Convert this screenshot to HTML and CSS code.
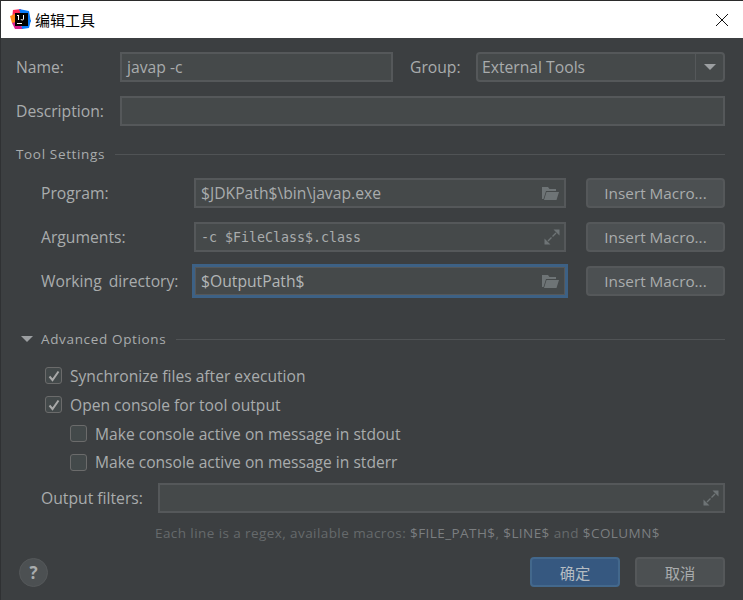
FILE: index.html
```html
<!DOCTYPE html>
<html lang="en">
<head>
  <meta charset="UTF-8">
  <meta name="viewport" content="width=device-width, initial-scale=1.0">
  <title>编辑工具</title>
  <link rel="stylesheet" href="styles.css">
</head>
<body>
  <div class="titlebar">
    <svg class="logo" width="21" height="21" viewBox="0 0 21 21">
      <polygon points="3,1 11,0 12,8 2,10" fill="#fe2857"/>
      <polygon points="0,7 5,5 7,14 2,14" fill="#ff8a1c"/>
      <polygon points="9,0 19,2 21,13 12,9" fill="#087cfa"/>
      <polygon points="2,14 9,12 13,20 5,20" fill="#d81f8e"/>
      <polygon points="11,11 21,11 19,19 12,20" fill="#087cfa"/>
      <rect x="5" y="4" width="13" height="13" fill="#000"/>
      <rect x="7" y="14" width="5" height="1" fill="#fff"/>
      <rect x="7" y="6" width="2" height="1" fill="#fff"/>
      <rect x="8" y="6" width="1" height="5" fill="#fff"/>
      <path d="M11 10 q0 1 1.2 1 q1.3 0 1.3 -1 V6" fill="none" stroke="#fff" stroke-width="1"/>
    </svg>
    <span class="title">编辑工具</span>
    <svg class="close" width="14" height="14" viewBox="0 0 14 14">
      <path d="M1 1 L13 13 M13 1 L1 13" stroke="#111" stroke-width="1" fill="none"/>
    </svg>
  </div>

  <div class="content">
    <div class="row-name">
      <label>Name:</label>
      <div class="field">javap -c</div>
      <label class="group-label">Group:</label>
      <div class="combo">
        <span class="combo-text">External Tools</span>
        <span class="combo-arrow"><i class="tri"></i></span>
      </div>
    </div>
    <div class="row-desc">
      <label>Description:</label>
      <div class="field"></div>
    </div>

    <div class="section-title tool-title">
      <span>Tool Settings</span>
      <i class="line"></i>
    </div>

    <div class="tool-rows">
      <label>Program:</label>
      <div class="field with-icon">
        <span>$JDKPath$\bin\javap.exe</span>
        <svg class="folder" width="18" height="14" viewBox="0 0 18 14"><path d="M1 1 H7 L8.5 3 H15 V5 H5 L2.5 13 H1 Z M5.5 6 H18 L15.5 14 H3 Z" fill="#6e7476"/></svg>
      </div>
      <button class="btn">Insert Macro...</button>

      <label>Arguments:</label>
      <div class="field with-icon mono">
        <span>-c $FileClass$.class</span>
        <svg class="expand" width="16" height="16" viewBox="0 0 16 16"><path d="M9.5 0.5 H15.5 V6.5 Z M0.5 9.5 V15.5 H6.5 Z" fill="#6e7476"/><path d="M12 4 L8.5 7.5 M4 12 L7.5 8.5" stroke="#6e7476" stroke-width="1.4" fill="none"/></svg>
      </div>
      <button class="btn">Insert Macro...</button>

      <label class="wide-label">Working directory:</label>
      <div class="field with-icon focused">
        <span>$OutputPath$</span>
        <svg class="folder" width="18" height="14" viewBox="0 0 18 14"><path d="M1 1 H7 L8.5 3 H15 V5 H5 L2.5 13 H1 Z M5.5 6 H18 L15.5 14 H3 Z" fill="#6e7476"/></svg>
      </div>
      <button class="btn">Insert Macro...</button>
    </div>

    <div class="section-title adv-title">
      <i class="tri adv-tri"></i>
      <span>Advanced Options</span>
      <i class="line"></i>
    </div>

    <div class="checks">
      <div class="check"><span class="box"><svg width="14" height="14" viewBox="0 0 14 14"><path d="M2.5 7.5 L5.5 11 L11.5 2.5" fill="none" stroke="#a9a9a9" stroke-width="2"/></svg></span>Synchronize files after execution</div>
      <div class="check"><span class="box"><svg width="14" height="14" viewBox="0 0 14 14"><path d="M2.5 7.5 L5.5 11 L11.5 2.5" fill="none" stroke="#a9a9a9" stroke-width="2"/></svg></span>Open console for tool output</div>
      <div class="check sub"><span class="box"></span>Make console active on message in stdout</div>
      <div class="check sub last"><span class="box"></span>Make console active on message in stderr</div>
    </div>

    <div class="row-filters">
      <label>Output filters:</label>
      <div class="field with-icon">
        <span></span>
        <svg class="expand" width="16" height="16" viewBox="0 0 16 16"><path d="M9.5 0.5 H15.5 V6.5 Z M0.5 9.5 V15.5 H6.5 Z" fill="#6e7476"/><path d="M12 4 L8.5 7.5 M4 12 L7.5 8.5" stroke="#6e7476" stroke-width="1.4" fill="none"/></svg>
      </div>
    </div>
    <p class="hint">Each line is a regex, available macros: <b>$FILE_PATH$</b>, <b>$LINE$</b> and <b>$COLUMN$</b></p>

    <div class="footer">
      <span class="help">?</span>
      <button class="btn primary cjk">确定</button>
      <button class="btn cancel cjk">取消</button>
    </div>
  </div>
</body>
</html>
```

FILE: styles.css
```css
/* Basic styling */
html, body {
  height: 100%;
}
body {
  margin: 0;
  height: 600px;
  overflow: hidden;
  background-color: #3c3f41;
  border-top: 1px solid #2b2b2b;
  border-left: 1px solid #2f3133;
  box-sizing: border-box;
  color: #a9acad;
  font-family: "Open Sans", "Noto Sans CJK SC", sans-serif;
  font-size: 15.7px;
}
label {
  white-space: nowrap;
}
.wide-label {
  word-spacing: 3px;
}

.titlebar {
  height: 37px;
  background-color: #fff;
  display: flex;
  align-items: center;
  padding-left: 9px;
  color: #000;
}
.logo {
  margin-right: 4px;
}
.title {
  font-family: "Noto Sans CJK SC", sans-serif;
  font-size: 15px;
  margin-top: -1px;
}
.close {
  margin-left: auto;
  margin-right: 14px;
}

.content {
  padding: 14px 18px 0 15px;
}

.field {
  height: 30px;
  box-sizing: border-box;
  border: 2px solid #55585a;
  background-color: #45494a;
  padding: 0 5px;
  display: flex;
  align-items: center;
  color: #a9acad;
}
.with-icon {
  justify-content: space-between;
}
.with-icon svg {
  flex: none;
}
.with-icon .expand {
  margin-right: -1px;
}
.focused {
  outline: 3px solid #3d6185;
  outline-offset: -1px;
  color: #b3b6b7;
}
.mono span {
  font-family: "DejaVu Sans Mono", monospace;
  font-size: 13.3px;
}

.row-name {
  display: grid;
  grid-template-columns: 104px 273px 83px 249px;
  align-items: center;
}
.group-label {
  padding-left: 17px;
}
.row-desc {
  display: grid;
  grid-template-columns: 104px 605px;
  align-items: center;
  margin-top: 14px;
}
.combo {
  height: 30px;
  box-sizing: border-box;
  border: 2px solid #55585a;
  border-radius: 4px;
  background-color: #45494a;
  display: flex;
  align-items: center;
}
.combo-text {
  flex: 1;
  padding-left: 4px;
}
.combo-arrow {
  width: 27px;
  height: 100%;
  border-left: 1px solid #55585a;
  display: flex;
  align-items: center;
  justify-content: center;
}
.tri {
  display: block;
  width: 0;
  height: 0;
  border-left: 6px solid transparent;
  border-right: 6px solid transparent;
  border-top: 6px solid #9c9fa1;
}

.section-title {
  display: flex;
  align-items: center;
  font-size: 13.5px;
  letter-spacing: 0.65px;
}
.section-title .line {
  flex: 1;
  height: 1px;
  background-color: #505355;
  margin-left: 10px;
}
.tool-title {
  margin-top: 18px;
  height: 20px;
}
.adv-title {
  margin-top: 33px;
  height: 20px;
  padding-left: 5px;
}
.adv-tri {
  margin-right: 8px;
}

.tool-rows {
  display: grid;
  grid-template-columns: 153px 372px 159px;
  grid-auto-rows: 30px;
  row-gap: 14px;
  align-items: center;
  margin-top: 14px;
  padding-left: 25px;
  justify-content: start;
}
.tool-rows .btn {
  justify-self: end;
}

.btn {
  width: 139px;
  height: 30px;
  box-sizing: border-box;
  border: 2px solid #55585a;
  border-radius: 4px;
  background-color: #4c5052;
  color: #a9acad;
  font-family: inherit;
  font-size: 15.3px;
  padding: 0;
}

.checks {
  margin-top: 12px;
  padding-left: 29px;
  font-size: 15.6px;
}
.check {
  height: 29px;
  display: flex;
  align-items: center;
  color: #a9acad;
}
.check.sub {
  padding-left: 25px;
}
.check.last {
  height: 28px;
}
.box {
  width: 17px;
  height: 17px;
  box-sizing: border-box;
  border: 1px solid #6b6b6b;
  border-radius: 3px;
  background-color: #43494a;
  margin-right: 8px;
  display: flex;
  align-items: center;
  justify-content: center;
}

.row-filters {
  display: grid;
  grid-template-columns: 117px 567px;
  align-items: center;
  margin-top: 7px;
  padding-left: 25px;
}
.hint {
  margin: 11px 0 0 139px;
  font-size: 13.5px;
  letter-spacing: 0.42px;
  color: #666a6c;
  white-space: nowrap;
}
.hint b {
  font-weight: normal;
  color: #7b7e80;
}

.footer {
  display: flex;
  align-items: center;
  margin-top: 15px;
}
.help {
  width: 29px;
  height: 29px;
  box-sizing: border-box;
  margin-left: 3px;
  border: 1px solid #55585a;
  border-radius: 50%;
  background-color: #4c5052;
  color: #a9acad;
  font-weight: 700;
  font-size: 17px;
  display: flex;
  align-items: center;
  justify-content: center;
}
.cjk {
  font-family: "Noto Sans CJK SC", sans-serif;
}
.btn.primary {
  width: 90px;
  margin-left: auto;
  background-color: #365880;
  border-color: #43688c;
  color: #b5bcc2;
}
.btn.cancel {
  width: 90px;
  margin-left: 15px;
}
```
